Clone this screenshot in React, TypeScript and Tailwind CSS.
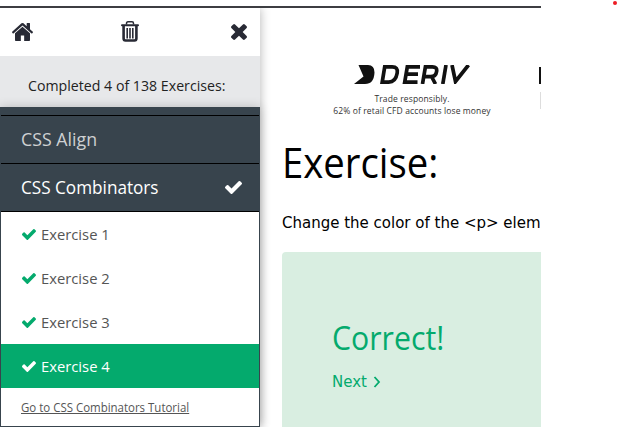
import type { ReactNode } from "react";

const SEGOE = "font-['Open_Sans','Noto_Sans',sans-serif]";

function Check({ className }: { className: string }) {
  return (
    <svg viewBox="121 334 1550 1188" preserveAspectRatio="none" fill="currentColor" className={className}>
      <path d="M1671 566q0 40-28 68l-724 724-136 136q-28 28-68 28t-68-28l-136-136-362-362q-28-28-28-68t28-68l136-136q28-28 68-28t68 28l294 295 656-657q28-28 68-28t68 28l136 136q28 28 28 68z" />
    </svg>
  );
}

function Home() {
  return (
    <svg viewBox="89 253 1614 1283" preserveAspectRatio="none" fill="currentColor" className="-mt-px h-[18px] w-[21px]">
      <path d="M1472 992v480q0 26-19 45t-45 19h-384v-384h-256v384h-384q-26 0-45-19t-19-45v-480q0-1 .5-3t.5-3l575-474 575 474q1 2 1 6zm223-69l-62 74q-8 9-21 11h-3q-13 0-21-7l-692-577-692 577q-12 8-24 7-13-2-21-11l-62-74q-8-10-7-23.5t11-21.5l719-599q32-26 76-26t76 26l244 204v-195q0-14 9-23t23-9h192q14 0 23 9t9 23v408l219 182q10 8 11 21.5t-7 23.5z" />
    </svg>
  );
}

function Trash() {
  return (
    <svg viewBox="0 0 18 21" fill="none" stroke="currentColor" className="-mt-0.5 mr-1 h-[21px] w-[18px]">
      <path d="M5.500 3.500V2.500Q5.500 .8 7 .8h4q1.500 0 1.500 1.700v1" strokeWidth="1.500" />
      <path d="M1 4.300h16" strokeWidth="2" strokeLinecap="round" />
      <path d="M2.600 5v12.300Q2.600 19.500 4.500 19.500h9q1.900 0 1.900-2.200V5" strokeWidth="2.600" />
      <path d="M6.200 7v10.500M9 7v10.500M11.800 7v10.500" strokeWidth="1.600" />
    </svg>
  );
}

function Times() {
  return (
    <svg viewBox="302 366 1188 1188" fill="currentColor" className="-mt-px size-4">
      <path d="M1490 1322q0 40-28 68l-136 136q-28 28-68 28t-68-28l-294-294-294 294q-28 28-68 28t-68-28l-136-136q-28-28-28-68t28-68l294-294-294-294q-28-28-28-68t28-68l136-136q28-28 68-28t68 28l294 294 294-294q28-28 68-28t68 28l136 136q28 28 28 68t-28 68l-294 294 294 294q28 28 28 68z" />
    </svg>
  );
}

function Category({ children, done }: { children: ReactNode; done?: boolean }) {
  return (
    <div className={`flex h-12 shrink-0 items-center justify-between border-b border-black pr-[17px] pl-5 text-[17.500px] ${done ? "text-white" : "text-[#cfd1d2]"}`}>
      <span className={`origin-left whitespace-nowrap ${done ? "scale-x-[0.980]" : "scale-x-[1.015]"}`}>{children}</span>
      {done && <Check className="mb-px h-[13px] w-[17px]" />}
    </div>
  );
}

function Exercise({ n, active }: { n: number; active?: boolean }) {
  return (
    <div className={`flex h-11 shrink-0 items-center gap-[5px] pl-[21px] text-[15px] ${active ? "bg-[#04aa6d] text-white" : "text-[#555]"}`}>
      <Check className={`h-[11px] w-[14px] ${active ? "text-white" : "text-[#04aa6d]"}`} />
      <span className="origin-left scale-x-[0.985] whitespace-nowrap">Exercise {n}</span>
    </div>
  );
}

function DerivLogo() {
  return (
    <div className="flex h-[19px] items-center justify-center gap-[5px] text-[#111]">
      <svg viewBox="0 0 21 19" fill="currentColor" className="h-[19px] w-[21px]">
        <path d="M4.500 0H14Q20.500 0 20.500 7.500 20 19 11 19H0L9.500 11.500Z" />
      </svg>
      <svg viewBox="0 0 91 19" fill="none" stroke="currentColor" strokeWidth="3.700" className="h-[19px] w-[91px]" role="img" aria-label="DERIV">
        <path d="M4.700 1.900h7.500q6 0 5 6.100-1.500 9.100-8.500 9.100H2.200Z" />
        <path d="M40 1.900H27.300L24.700 17.100H37.500M26.500 9.200H38" />
        <path d="M42.500 19L45.400 1.900h7q5 0 4.200 4.600-.7 5.200-6 5.200H45M51.500 11.500l4 7.500" />
        <path d="M66 0l-3.200 19" />
        <path d="M72 0l3.500 16.500L88.500 0" />
      </svg>
    </div>
  );
}

function Sidebar() {
  return (
    <aside className={`flex w-[260px] shrink-0 flex-col bg-white shadow-[0_0_10px_rgba(0,0,0,0.3)] ${SEGOE}`}>
      <nav className="flex h-12 shrink-0 items-center justify-between pr-[13px] pl-3 text-[#282a35]">
        <Home />
        <Trash />
        <Times />
      </nav>
      <div className="flex h-[51px] shrink-0 items-center bg-[#e7e8ea] pt-2 pl-7 text-[14px] text-[#222]">
        <span className="origin-left scale-x-[1.012] whitespace-nowrap">Completed 4 of 138 Exercises:</span>
      </div>
      <div className="flex h-80 shrink-0 flex-col border-x border-b border-[#38444d] bg-white shadow-[0_0_10px_rgba(0,0,0,0.2)]">
        <div className="flex shrink-0 flex-col bg-[#38444d]">
          <div className="h-[9px] border-b border-black" />
          <Category>CSS Align</Category>
          <Category done>CSS Combinators</Category>
        </div>
        <Exercise n={1} />
        <Exercise n={2} />
        <Exercise n={3} />
        <Exercise n={4} active />
        <a className="mt-3 ml-5 w-fit origin-left scale-x-[0.955] text-[12px] leading-4 whitespace-nowrap text-[#555] underline">Go to CSS Combinators Tutorial</a>
      </div>
    </aside>
  );
}

export default function App() {
  return (
    <div className="flex h-[427px] w-[618px] justify-between overflow-hidden bg-white">
      <div className="flex w-[541px] flex-col overflow-hidden pt-1.5">
        <div className="h-0.5 shrink-0 bg-[#3d3e42]" />
        <div className="flex min-h-0 flex-1 overflow-hidden">
          <Sidebar />
          <main className="w-[281px] shrink-0 overflow-hidden pl-[22px]">
            <div className="mt-[57px] flex h-[54px] w-[259px]">
              <div className="w-[257px] shrink-0 pl-[3px] text-center font-['Open_Sans','Noto_Sans',sans-serif] text-[8.5px] leading-3 text-[#333]">
                <DerivLogo />
                <p className="mt-[9px] tracking-[0.12px]">Trade responsibly.</p>
                <p className="tracking-[0.12px] whitespace-nowrap">62% of retail CFD accounts lose money</p>
              </div>
              <div className="flex w-0.5 shrink-0 flex-col items-end pt-0.5">
                <div className="h-[17px] w-0.5 bg-[#111]" />
                <div className="mt-2 h-[17px] w-px bg-[#ddd]" />
              </div>
            </div>
            <h1 className={`mt-[13px] w-fit origin-left scale-x-[0.912] text-[42px] leading-[60px] whitespace-nowrap text-black ${SEGOE}`}>Exercise:</h1>
            <p className="mt-[19px] h-6 text-[15px] leading-6 whitespace-nowrap text-black font-['DejaVu_Sans',sans-serif]">Change the color of the &lt;p&gt; elem</p>
            <section className="mt-[17px] h-[184px] rounded-tl bg-[#d9eee1] pt-[62px] pl-[50px] text-[#04aa6d]">
              <h2 className={`w-fit origin-left scale-x-[0.945] text-[32px] leading-[48px] ${SEGOE}`}>Correct!</h2>
              <div className="mt-2 flex items-center gap-1.5 text-[15px] leading-6 font-['DejaVu_Sans',sans-serif]">
                <span>Next</span>
                <svg viewBox="0 0 8 12" fill="none" stroke="currentColor" strokeWidth="1.800" className="h-3 w-2">
                  <path d="M1.500 1l4.500 5-4.500 5" />
                </svg>
              </div>
            </section>
          </main>
        </div>
      </div>
      <div className="mt-px mr-px size-1 rounded-full bg-[#ed1c24]" />
    </div>
  );
}
